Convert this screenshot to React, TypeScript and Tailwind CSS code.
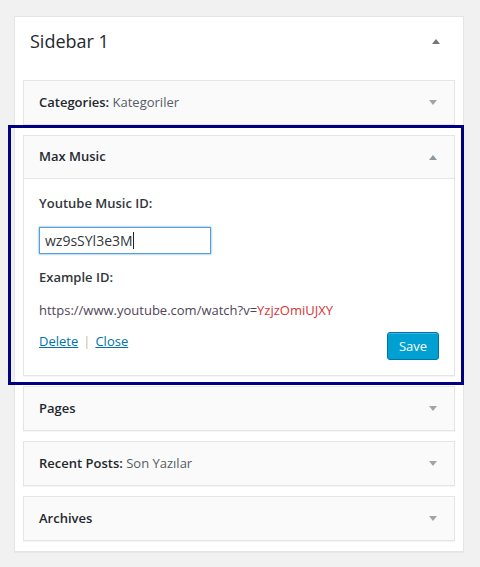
import React from "react";

const font = { fontFamily: '"Open Sans", "Noto Sans", Arial, sans-serif' };

function Down() {
  return <span className="block w-0 h-0 border-x-[4px] border-x-transparent border-t-[5px] border-t-[#a0a5aa]" />;
}
function Up({ color }: { color: string }) {
  return <span className={`block w-0 h-0 border-x-[4px] border-x-transparent border-b-[5px] ${color}`} />;
}

function Widget({ title, sub }: { title: string; sub?: string }) {
  return (
    <div className="border border-[#e5e5e5] bg-[#fafafa] shadow-[0_1px_1px_rgba(0,0,0,0.04)]">
      <div className="h-[43px] flex items-center justify-between pl-[15px] pr-[17px]">
        <div className="text-[13px] font-semibold text-[#23282d]">
          {title}
          {sub && <span className="font-normal text-[#555d66]">{sub}</span>}
        </div>
        <Down />
      </div>
    </div>
  );
}

export default function App() {
  return (
    <div style={font} className="min-h-[567px] bg-[#f1f1f1] pt-[16px] pl-[14px]">
      <div className="w-[450px] border border-[#e5e5e5] bg-white shadow-[0_1px_1px_rgba(0,0,0,0.04)]">
        <div className="h-[48px] flex items-center justify-between pl-[15px] pr-[23px]">
          <h2 className="text-[18px] font-medium text-[#23282d]">Sidebar 1</h2>
          <Up color="border-b-[#72777c]" />
        </div>
        <div className="flex flex-col gap-[10px] px-[8px] pt-[15px] pb-[10px]">
          <Widget title="Categories: " sub="Kategoriler" />
          <div className="relative">
            <div className="border border-[#e5e5e5] bg-white shadow-[0_1px_1px_rgba(0,0,0,0.04)]">
              <div className="h-[43px] flex items-center justify-between pl-[15px] pr-[17px] bg-[#fafafa] border-b border-[#e5e5e5]">
                <div className="text-[13px] font-semibold text-[#23282d]">Max Music</div>
                <Up color="border-b-[#8f98a1]" />
              </div>
              <div className="px-[15px] pt-[15px] pb-[15px] text-[13px] leading-[18px] text-[#444]">
                <div className="font-semibold text-[#32373c]">Youtube Music ID:</div>
                <div className="mt-[15px] w-[172px] h-[27px] border border-[#5b9dd9] shadow-[0_0_2px_rgba(30,140,190,0.8)] flex items-center pl-[5px] text-[14px] text-[#32373c]">
                  wz9sSYl3e3M<span className="inline-block w-px h-[17px] bg-[#222]" />
                </div>
                <div className="mt-[14px] font-semibold text-[#32373c]">Example ID:</div>
                <div className="mt-[15px] text-[#50455a]">
                  https://www.youtube.com/watch?v=<span className="text-[#d63638]">YzjzOmiUJXY</span>
                </div>
                <div className="mt-[13px] flex items-start justify-between">
                  <div className="leading-[18px]">
                    <a className="text-[#0073aa] underline">Delete</a>
                    <span className="text-[#c7b89f] mx-[5px]">|</span>
                    <a className="text-[#0073aa] underline">Close</a>
                  </div>
                  <button className="h-[28px] w-[52px] rounded-[3px] bg-[#00a0d2] border border-[#0073aa] text-white text-[13px] shadow-[inset_0_1px_0_rgba(120,200,230,0.5)]">
                    Save
                  </button>
                </div>
              </div>
            </div>
            <div className="absolute left-[-15px] top-[-10px] right-[-9px] bottom-[-9px] border-[3px] border-[#000080] pointer-events-none" />
          </div>
          <Widget title="Pages" />
          <Widget title="Recent Posts: " sub="Son Yazılar" />
          <Widget title="Archives" />
        </div>
      </div>
    </div>
  );
}
